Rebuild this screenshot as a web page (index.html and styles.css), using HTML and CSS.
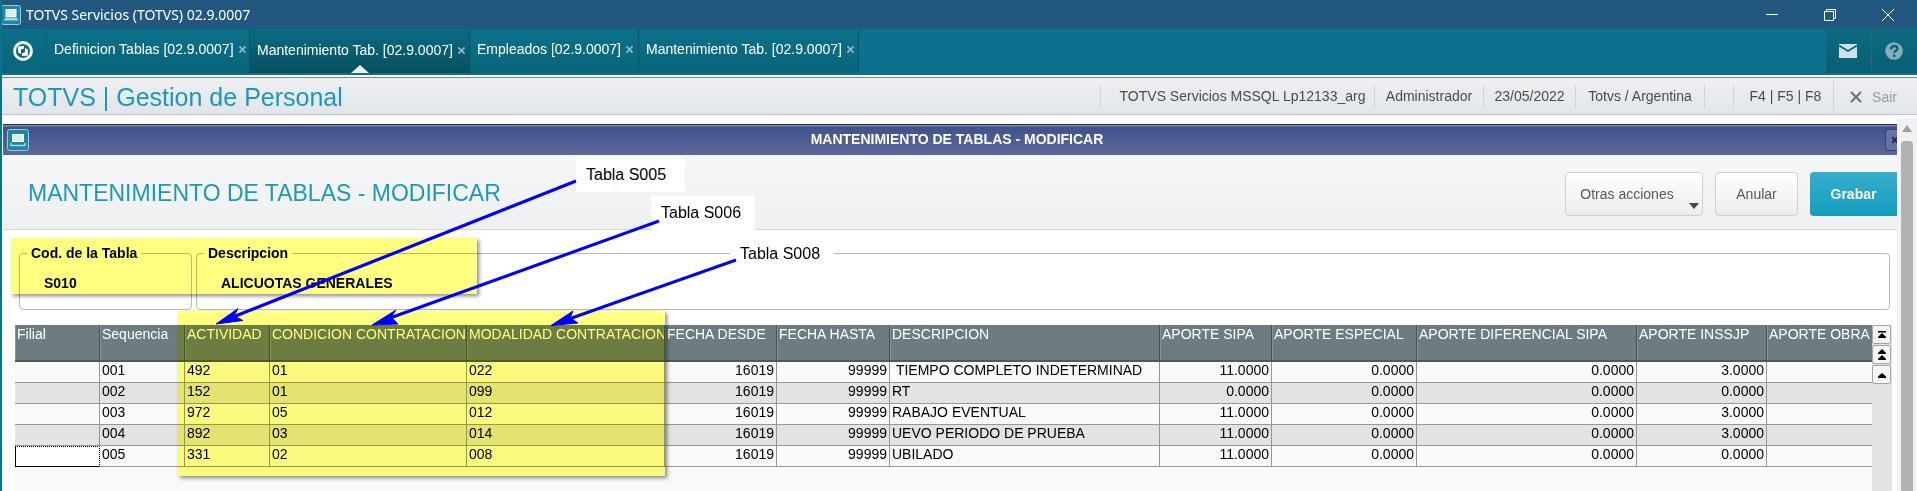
FILE: index.html
```
<!DOCTYPE html>
<html lang="es">
<head>
<meta charset="utf-8">
<title>TOTVS Servicios (TOTVS) 02.9.0007</title>
<link rel="stylesheet" href="styles.css">
</head>
<body>
<header class="titlebar">
  <svg class="app-icon" viewBox="0 0 20 20"><rect x="0.5" y="0.5" width="19" height="19" rx="2" fill="#1d87a5" stroke="#9ccbd8"/><rect x="5" y="4.500" width="10" height="7" fill="#dcebf0" stroke="#fff"/><path d="M2.500 15.500h15l-2-3h-11z" fill="#a9d3de"/></svg>
  <h1 class="titlebar-text">TOTVS Servicios (TOTVS) 02.9.0007</h1>
  <div class="window-controls">
    <button class="window-button" aria-label="Minimizar"><svg viewBox="0 0 12 12"><path d="M0 5.5h12"/></svg></button>
    <button class="window-button" aria-label="Restaurar"><svg viewBox="0 0 12 12"><path d="M.5 2.500h9v9h-9zM2.500 2V.5h9v9H10"/></svg></button>
    <button class="window-button" aria-label="Cerrar"><svg viewBox="0 0 12 12"><path d="M0 0l12 12M12 0L0 12"/></svg></button>
  </div>
</header>
<nav class="tabs">
  <button class="home" aria-label="Inicio"><svg viewBox="0 0 20 20"><circle cx="10" cy="10" r="8.500" fill="none" stroke="#fff" stroke-width="2.800"/><path d="M5 5.500l6-.5v3l-3 1v4l-3-1.500zM15 14.500l-6 .5v-3l3-1V7l3 1.500z" fill="#fff"/><path d="M8 8.500l3-1 1 3.500-3 1z" fill="#0a647b"/></svg></button>
  <div class="tab tab-wide-first"><span>Definicion Tablas [02.9.0007]</span><button class="tab-close" aria-label="Cerrar"><svg viewBox="0 0 8 8"><path d="M.5.5l7 7M7.500.5l-7 7"/></svg></button></div>
  <div class="tab tab-wide tab-active"><span>Mantenimiento Tab. [02.9.0007]</span><button class="tab-close" aria-label="Cerrar"><svg viewBox="0 0 8 8"><path d="M.5.5l7 7M7.500.5l-7 7"/></svg></button></div>
  <div class="tab tab-short"><span>Empleados [02.9.0007]</span><button class="tab-close" aria-label="Cerrar"><svg viewBox="0 0 8 8"><path d="M.5.5l7 7M7.500.5l-7 7"/></svg></button></div>
  <div class="tab tab-wide"><span>Mantenimiento Tab. [02.9.0007]</span><button class="tab-close" aria-label="Cerrar"><svg viewBox="0 0 8 8"><path d="M.5.5l7 7M7.500.5l-7 7"/></svg></button></div>
  <div class="nav-actions">
    <button class="nav-action" aria-label="Mensajes"><svg width="18" height="14" viewBox="0 0 18 14"><path d="M0 0h18v14H0z" fill="#cfe3e9"/><path d="M0 1.500l9 5.500 9-5.500" fill="none" stroke="#0a6379" stroke-width="1.800"/></svg></button>
    <button class="nav-action" aria-label="Ayuda"><svg width="18" height="18" viewBox="0 0 18 18"><circle cx="9" cy="9" r="8.800" fill="#86adba"/><path d="M6 7.500c0-4.500 6.500-4.500 6.500-.8 0 2-3.300 2-3.300 4M9.200 12.500v2.500" fill="none" stroke="#0a5f75" stroke-width="2.400"/></svg></button>
  </div>
</nav>
<section class="infobar">
  <h2 class="module">TOTVS | Gestion de Personal</h2>
  <div class="info info-env">TOTVS Servicios MSSQL Lp12133_arg</div>
  <div class="info info-user">Administrador</div>
  <div class="info info-date">23/05/2022</div>
  <div class="info info-branch">Totvs / Argentina</div>
  <div class="info info-blank"></div>
  <div class="info info-keys">F4 | F5 | F8</div>
  <button class="exit"><svg viewBox="0 0 12 12"><path d="M1 1l10 10M11 1L1 11"/></svg>Sair</button>
</section>
<div class="workspace">
  <main class="dialog">
    <div class="dialog-title">
      <svg class="dialog-icon" viewBox="0 0 22 22"><rect x="0.500" y="0.500" width="21" height="21" rx="2" fill="#1d87a5" stroke="#9ccbd8"/><rect x="5.500" y="5.500" width="11" height="7" fill="#dcebf0" stroke="#fff"/><path d="M4 14v2.500h14V14" fill="none" stroke="#a9d3de" stroke-width="1.500"/></svg>
      <strong>MANTENIMIENTO DE TABLAS - MODIFICAR</strong>
      <button class="dialog-close" aria-label="Cerrar"><svg viewBox="0 0 6 8"><path d="M0 .5l7 7M0 7.500l7-7" fill="none" stroke="#20284f" stroke-width="2.200"/></svg></button>
    </div>
    <div class="toolbar">
      <h3 class="toolbar-title">MANTENIMIENTO DE TABLAS - MODIFICAR</h3>
      <button class="action action-menu">Otras acciones</button>
      <button class="action action-cancel">Anular</button>
      <button class="action action-save">Grabar</button>
    </div>
    <div class="fields">
      <fieldset class="field field-code"><legend>Cod. de la Tabla</legend><output>S010</output></fieldset>
      <fieldset class="field field-desc"><legend>Descripcion</legend><output>ALICUOTAS GENERALES</output></fieldset>
    </div>
    <div class="grid">
      <table class="data">
        <colgroup><col class="c-key"><col class="c-key"><col class="c-key"><col class="c-cond"><col class="c-mod"><col class="c-date"><col class="c-until"><col class="c-desc"><col class="c-date"><col class="c-esp"><col class="c-dif"><col class="c-ins"><col></colgroup>
        <thead><tr><th>Filial</th><th>Sequencia</th><th>ACTIVIDAD</th><th>CONDICION CONTRATACION</th><th>MODALIDAD CONTRATACION</th><th>FECHA DESDE</th><th>FECHA HASTA</th><th>DESCRIPCION</th><th>APORTE SIPA</th><th>APORTE ESPECIAL</th><th>APORTE DIFERENCIAL SIPA</th><th>APORTE INSSJP</th><th>APORTE OBRA</th></tr></thead>
        <tbody>
          <tr><td></td><td>001</td><td>492</td><td>01</td><td>022</td><td class="num">16019</td><td class="num">99999</td><td>&nbsp;TIEMPO COMPLETO INDETERMINAD</td><td class="num">11.0000</td><td class="num">0.0000</td><td class="num">0.0000</td><td class="num">3.0000</td><td></td></tr>
          <tr><td></td><td>002</td><td>152</td><td>01</td><td>099</td><td class="num">16019</td><td class="num">99999</td><td>RT</td><td class="num">0.0000</td><td class="num">0.0000</td><td class="num">0.0000</td><td class="num">0.0000</td><td></td></tr>
          <tr><td></td><td>003</td><td>972</td><td>05</td><td>012</td><td class="num">16019</td><td class="num">99999</td><td>RABAJO EVENTUAL</td><td class="num">11.0000</td><td class="num">0.0000</td><td class="num">0.0000</td><td class="num">3.0000</td><td></td></tr>
          <tr><td></td><td>004</td><td>892</td><td>03</td><td>014</td><td class="num">16019</td><td class="num">99999</td><td>UEVO PERIODO DE PRUEBA</td><td class="num">11.0000</td><td class="num">0.0000</td><td class="num">0.0000</td><td class="num">3.0000</td><td></td></tr>
          <tr><td class="focused"></td><td>005</td><td>331</td><td>02</td><td>008</td><td class="num">16019</td><td class="num">99999</td><td>UBILADO</td><td class="num">11.0000</td><td class="num">0.0000</td><td class="num">0.0000</td><td class="num">0.0000</td><td></td></tr>
        </tbody>
      </table>
      <div class="grid-nav">
        <button aria-label="Primero"><svg viewBox="0 0 10 8"><path d="M1 0h8v1.500H1zM5 2l4 4v1H1V6z"/></svg></button>
        <button aria-label="Pagina anterior"><svg viewBox="0 0 10 12"><path d="M5 0l4 4v1H1V4zM5 6l4 4v1H1v-1z"/></svg></button>
        <button aria-label="Anterior"><svg viewBox="0 0 10 8"><path d="M5 2l4 3.500V7H1V5.500z"/></svg></button>
      </div>
    </div>
  </main>
  <div class="scrollbar"><span class="scroll-up"></span><span class="scroll-thumb"></span></div>
</div>
<div class="mark mark-fields"></div>
<div class="mark mark-columns"></div>
<div class="note note-a">Tabla S005</div>
<div class="note note-b">Tabla S006</div>
<div class="note note-c">Tabla S008</div>
<svg class="arrows" width="760" height="340" viewBox="0 0 760 340">
  <path d="M576 181L233 317M659 221L390 318M736 260L569 319" fill="none" stroke="#00f" stroke-width="3"/>
  <path d="M216 324L238 308.500 234 316 243 320.500zM372 325L396 310 391 317 398 324zM551 325.500L573 311 570 318 578 323z" fill="#00f" stroke="#00f"/>
</svg>
</body>
</html>
```
FILE: styles.css
```
* { box-sizing: border-box; }
body { margin: 0; min-height: 100vh; position: relative; display: flex; flex-direction: column; overflow: hidden; background: #fff; font-family: "Liberation Sans", Arial, sans-serif; font-size: 14px; color: #000; border-left: 2px solid #0b718d; }
button { margin: 0; padding: 0; border: 0; background: none; font: inherit; color: inherit; display: flex; align-items: center; justify-content: center; }
h1, h2, h3 { margin: 0; font-weight: normal; }

.titlebar { height: 29px; margin-left: -2px; display: flex; align-items: center; background: #22577f; color: #fff; padding-left: 1px; }
.app-icon { width: 20px; height: 20px; margin-right: 5px; }
.titlebar-text { font: 14px/20px "Noto Sans", "Open Sans", sans-serif; flex: 1; }
.window-controls { display: flex; }
.window-button { width: 58px; height: 29px; }
.window-button svg { width: 12px; height: 12px; fill: none; stroke: #fff; }

.tabs { height: 46px; margin-left: -2px; display: flex; padding-bottom: 2px; background: #0b718d; color: #fff; }
.home { width: 47px; background: linear-gradient(#0b708a, #0a647b); border-right: 1px solid #0a5f75; }
.home svg { width: 20px; height: 20px; }
.tab { height: 44px; display: flex; align-items: center; gap: 5px; padding: 0 0 4px 7px; background: linear-gradient(#0b718b, #08647a); border-right: 1px solid #07546a; line-height: 18px; white-space: nowrap; position: relative; }
.tab-wide-first { width: 203px; }
.tab-wide { width: 220px; }
.tab-short { width: 169px; }
.tab-active { padding-bottom: 2px; background: linear-gradient(#0a6b83, #07505f); }
.tab-active::after { content: ""; position: absolute; bottom: 0; left: calc(50% - 9px); border: solid transparent; border-width: 0 9px 8px; border-bottom-color: #eef3f5; }
.tab-close svg { width: 7px; height: 7px; stroke: #8abccb; stroke-width: 2; }
.nav-actions { margin-left: auto; display: flex; gap: 1px; }
.nav-action { width: 45px; padding-right: 1px; background: linear-gradient(#0b6a81, #0a5f75); }

.infobar { height: 43px; display: flex; align-items: center; border-top: 2px solid #fff; background: linear-gradient(#808589 1px, #eef0f2 1px, #e1e5e9 37px, #bfc6d3 37px, #bfc6d3 38px, #f4f5f5 38px, #fff 41px); padding-bottom: 2px; color: #4b4b4d; }
.module { flex: 1; padding-left: 11px; color: #1e98b8; font-size: 25px; line-height: 28px; }
.info { height: 23px; line-height: 23px; border-left: 1px solid #cfd3d8; text-align: center; }
.info-env { width: 274px; padding-left: 10px; }
.info-user { width: 109px; }
.info-date { width: 92px; }
.info-branch { width: 129px; }
.info-blank { width: 29px; }
.info-keys { width: 100px; padding-left: 4px; }
.exit { width: 84px; height: 34px; padding-right: 4px; gap: 10px; border-left: 1px solid #cfd3d8; color: #9499a0; }
.exit svg { width: 12px; height: 12px; stroke: #6b7079; stroke-width: 2; }

.workspace { flex: 1; display: flex; }
.dialog { flex: 1; min-width: 0; margin-left: 1px; padding-top: 6px; display: flex; flex-direction: column; overflow: hidden; }
.dialog-title { height: 31px; display: flex; align-items: center; justify-content: space-between; border-top: 1px solid #2d3147; background: linear-gradient(#7b86a8 1px, #3f528c 2px, #5f699c); color: #fff; padding-left: 4px; line-height: 16px; }
.dialog-title strong { padding-bottom: 2px; }
.dialog-icon { width: 22px; height: 22px; }
.dialog-close { width: 12px; height: 22px; border: 1px solid #33437f; border-right: 0; border-radius: 3px 0 0 3px; background: #6873a5; justify-content: flex-end; }
.dialog-close svg { width: 5px; height: 8px; }
.toolbar { height: 75px; display: flex; align-items: center; gap: 12px; background: linear-gradient(#f5f7f7, #eeeff1); border-bottom: 1px solid #d4d5d7; padding: 4px 0 0 25px; }
.toolbar-title { flex: 1; padding-bottom: 2px; color: #1e98b8; font-size: 23px; line-height: 28px; }
.action { height: 44px; border: 1px solid #cdcfd1; border-radius: 4px; background: linear-gradient(#fff, #ececec); color: #55585c; }
.action-menu { width: 138px; padding-right: 14px; position: relative; }
.action-menu::after { content: ""; position: absolute; right: 3px; bottom: 6px; border: solid transparent; border-width: 6px 5px 0; border-top-color: #44474d; }
.action-cancel { width: 83px; }
.action-save { width: 87px; border: 0; border-radius: 4px 0 0 4px; background: linear-gradient(#37aecd, #149cbe); color: #fff; font-weight: bold; }

.fields { display: flex; gap: 4px; padding: 14px 7px 0 16px; font-weight: bold; }
.field { margin: 0; padding: 11px 22px 0 24px; height: 66px; border: 1px solid #b9b9bb; border-radius: 4px; }
.field legend { margin-left: -17px; padding: 0 4px; line-height: 18px; }
.field output { line-height: 20px; }
.field-code { width: 173px; }
.field-desc { flex: 1; }

.grid { flex: 1; margin: 15px 5px 0 12px; display: flex; background: #f9f9f9; align-items: stretch; }
.data { flex: 1; width: 100%; table-layout: fixed; border-collapse: separate; border-spacing: 0; align-self: flex-start; }
.c-key { width: 85px; }
.c-cond { width: 197px; }
.c-mod { width: 198px; }
.c-date { width: 112px; }
.c-until { width: 113px; }
.c-desc { width: 270px; }
.c-esp { width: 145px; }
.c-dif { width: 220px; }
.c-ins { width: 130px; }
.data th { height: 37px; padding: 0 0 0 2px; text-align: left; vertical-align: top; font-weight: normal; line-height: 18px; color: #fff; background: #6d7c80; border-right: 1px solid #465053; border-bottom: 2px solid #505a5d; box-shadow: inset 1px 0 #879498; white-space: nowrap; overflow: hidden; }
.data td { height: 21px; padding: 0 2px; line-height: 17px; vertical-align: top; border-right: 1px solid #96979a; border-bottom: 1px solid #96979a; white-space: nowrap; overflow: hidden; }
.data th:last-child, .data td:last-child { border-right: 0; }
.data tbody tr:nth-child(even) { background: #e3e3e3; }
.data .num { text-align: right; }
.data .focused { border: 1px solid #000; border-top-style: dotted; border-right-style: dotted; background: #fff; }
.grid-nav { width: 20px; display: flex; flex-direction: column; gap: 1px; background: #e3e3e3; }
.grid-nav button { width: 19px; height: 19px; border: 1px solid #a5a5a7; border-radius: 2px; background: #f5f5f5; }
.grid-nav svg { width: 10px; }

.scrollbar { width: 20px; padding: 7px 4px 0 3px; display: flex; flex-direction: column; align-items: center; gap: 9px; background: #f1f1f1; }
.scroll-up { border: solid transparent; border-width: 0 5px 7px; border-bottom-color: #a0a0a0; }
.scroll-thumb { width: 12px; flex: 1; border-radius: 4px 4px 0 0; background: #b1b1b1; }

.mark { position: absolute; background: #ffff80; mix-blend-mode: multiply; box-shadow: 2px 2px 4px #888; }
.mark-fields { left: 9px; top: 238px; width: 466px; height: 56px; }
.mark-columns { left: 176px; top: 311px; width: 487px; height: 165px; }
.note { position: absolute; background: #fff; font-size: 16px; line-height: 20px; padding: 7px 10px; }
.note-a { left: 574px; top: 158px; width: 109px; }
.note-b { left: 649px; top: 196px; width: 104px; }
.note-c { left: 728px; top: 237px; width: 104px; }
.arrows { position: absolute; left: -2px; top: 0; }
```
